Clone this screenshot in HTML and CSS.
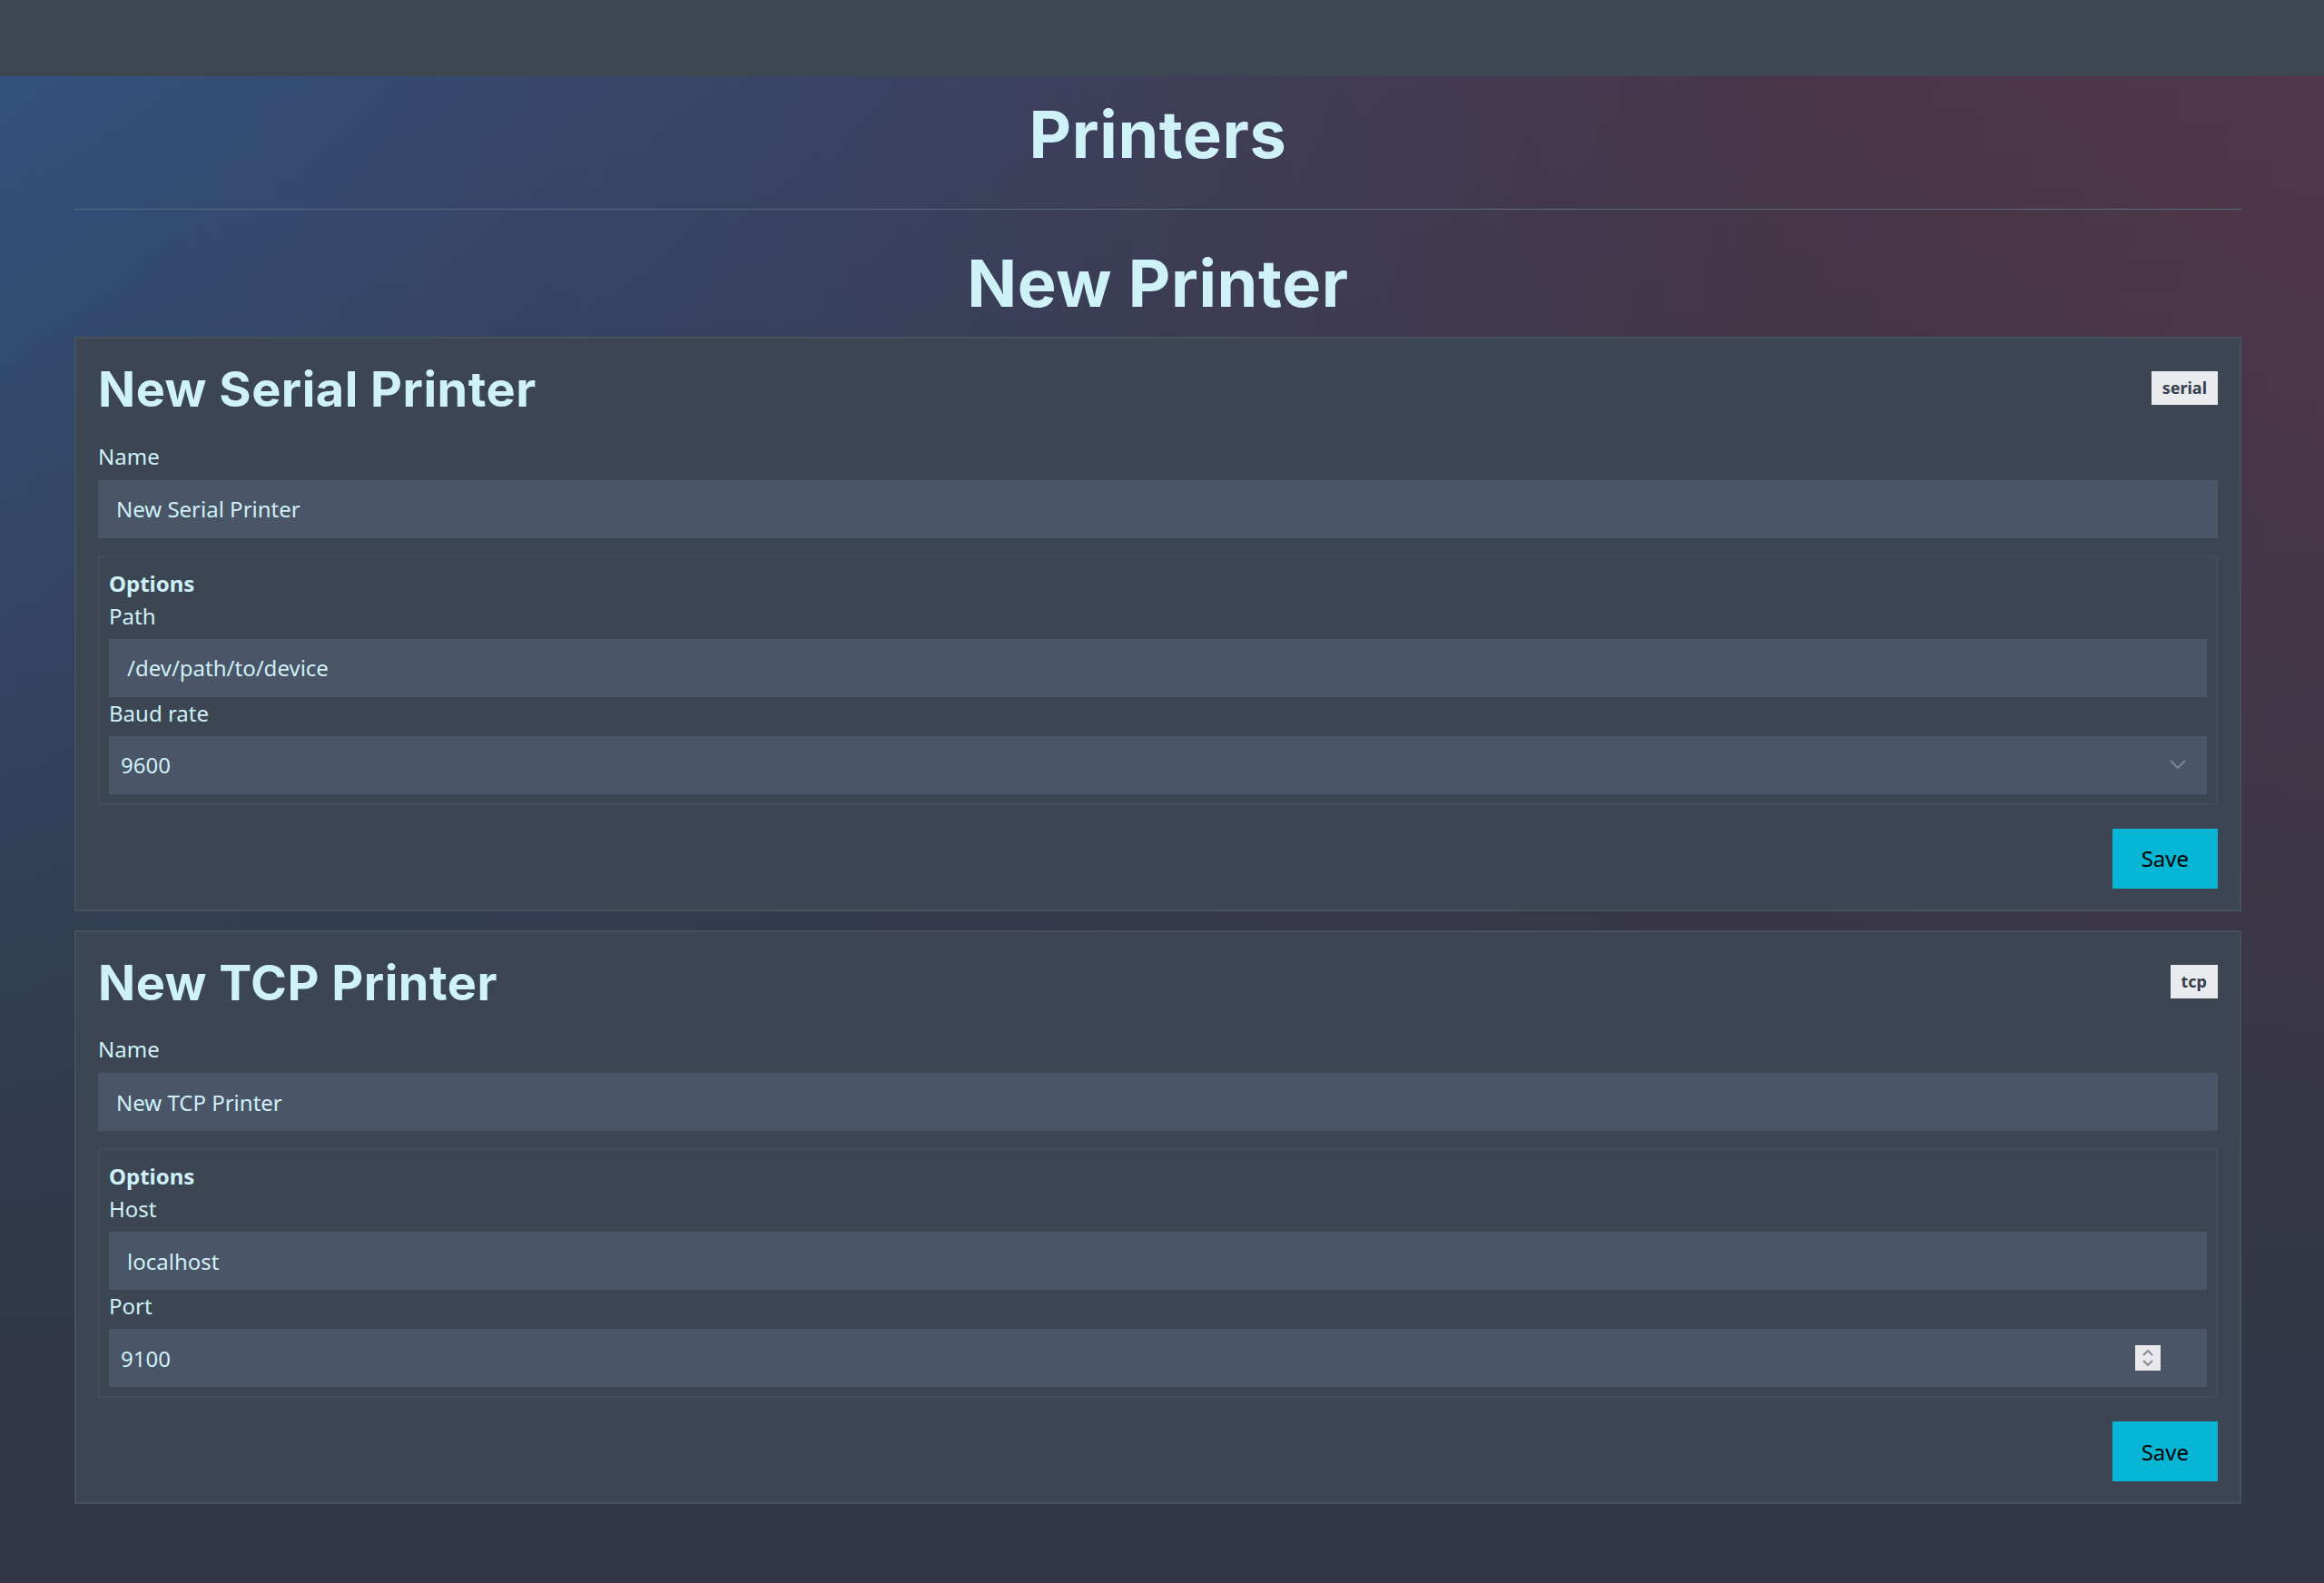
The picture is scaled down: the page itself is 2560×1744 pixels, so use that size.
FILE: index.html
```html
<!DOCTYPE html>
<html lang="en">
<head>
<meta charset="utf-8">
<title>Printers</title>
<link rel="stylesheet" href="styles.css">
</head>
<body>
<header class="topbar"></header>
<main class="main">
  <div class="container">
    <h1 class="page-title">Printers</h1>
    <hr class="divider">
    <h2 class="section-title">New Printer</h2>

    <section class="card">
      <div class="card-head">
        <h3 class="card-title">New Serial Printer</h3>
        <span class="badge">serial</span>
      </div>
      <label class="label">Name</label>
      <input class="field field-text" type="text" value="New Serial Printer">
      <div class="options">
        <div class="options-title">Options</div>
        <label class="label">Path</label>
        <input class="field field-text" type="text" value="/dev/path/to/device">
        <label class="label">Baud rate</label>
        <div class="control-wrap">
          <select class="field field-compact"><option>9600</option></select>
          <svg class="chevron" width="20" height="12" viewBox="0 0 20 12"><path d="M2 2 L10 10 L18 2" fill="none" stroke="#7c8594" stroke-width="2"/></svg>
        </div>
      </div>
      <div class="actions"><button class="btn" type="button">Save</button></div>
    </section>

    <section class="card">
      <div class="card-head">
        <h3 class="card-title">New TCP Printer</h3>
        <span class="badge">tcp</span>
      </div>
      <label class="label">Name</label>
      <input class="field field-text" type="text" value="New TCP Printer">
      <div class="options">
        <div class="options-title">Options</div>
        <label class="label">Host</label>
        <input class="field field-text" type="text" value="localhost">
        <label class="label">Port</label>
        <div class="control-wrap">
          <input class="field field-compact" type="text" value="9100">
          <span class="spinner"><svg width="28" height="28" viewBox="0 0 28 28"><path d="M9 11 L14 6 L19 11" fill="none" stroke="#8b8b96" stroke-width="2"/><path d="M9 17 L14 22 L19 17" fill="none" stroke="#8b8b96" stroke-width="2"/></svg></span>
        </div>
      </div>
      <div class="actions"><button class="btn" type="button">Save</button></div>
    </section>
  </div>
</main>
</body>
</html>
```

FILE: styles.css
```css
html, body {
  margin: 0;
  padding: 0;
}
body {
  background: #313744;
  font-family: "Noto Sans", "DejaVu Sans", sans-serif;
  color: #cff0f6;
  min-height: 100vh;
}
.topbar {
  height: 84px;
  background: #3d4752;
}
.main {
  min-height: calc(100vh - 84px);
  background:
    linear-gradient(180deg, rgba(49,55,68,0) 0%, rgba(49,55,68,0.45) 35%, #313744 85%),
    linear-gradient(95deg, #33527e 0%, #36486d 20%, #3d3f5b 45%, #483648 72%, #55364a 100%);
}
.container {
  padding: 21px 91px 40px 82px;
}
.page-title, .section-title, .card-title {
  font-family: "Inter", "Liberation Sans", sans-serif;
  font-weight: 700;
  color: #cff2f8;
  margin: 0;
  line-height: 1.2;
  letter-spacing: 0.6px;
}
.page-title, .section-title {
  text-align: center;
  font-size: 72px;
}
.divider {
  border: 0;
  height: 1px;
  background: #576a7b;
  margin: 39px 0 38px;
}
.section-title {
  margin-bottom: 15px;
}
.card {
  background: #3c4653;
  border: 2px solid #47505d;
  padding: 24px 24px 23px;
  display: flex;
  flex-direction: column;
  margin-bottom: 21px;
}
.card-head {
  display: flex;
  align-items: center;
  justify-content: space-between;
  margin-bottom: 23px;
}
.card-title {
  font-size: 54px;
  letter-spacing: 0.5px;
}
.badge {
  background: #e9ebef;
  color: #363e4b;
  font-weight: 700;
  font-size: 18px;
  line-height: 27px;
  padding: 5px 12px;
  margin-top: -3px;
}
.label {
  display: block;
  font-size: 24px;
  line-height: 36px;
  margin-bottom: 8px;
}
.field {
  display: block;
  box-sizing: border-box;
  width: 100%;
  height: 64px;
  border: 0;
  outline: none;
  background: #4a5568;
  color: #cff0f6;
  font-family: "Noto Sans", "DejaVu Sans", sans-serif;
  font-size: 24px;
  margin: 0;
  -webkit-appearance: none;
  appearance: none;
  border-radius: 0;
}
.field-text {
  padding: 0 20px;
}
.field-compact {
  padding: 0 13px;
}
.options {
  margin-top: 19px;
  border: 2px solid #444d5a;
  padding: 11px 10px 10px;
}
.options-title {
  font-size: 24px;
  line-height: 36px;
  font-weight: 700;
}
.options .label {
  line-height: 35px;
}
.control-wrap {
  position: relative;
}
.chevron {
  position: absolute;
  right: 22px;
  top: 25px;
  pointer-events: none;
}
.spinner {
  position: absolute;
  right: 51px;
  top: 18px;
  width: 28px;
  height: 28px;
  background: #e9e9ed;
  display: flex;
}
.actions {
  display: flex;
  justify-content: flex-end;
  margin-top: 26px;
}
.btn {
  background: #06b6d4;
  color: #000;
  border: 0;
  font-family: "Noto Sans", "DejaVu Sans", sans-serif;
  font-size: 24px;
  height: 66px;
  padding: 0 32px;
  border-radius: 0;
}
```
